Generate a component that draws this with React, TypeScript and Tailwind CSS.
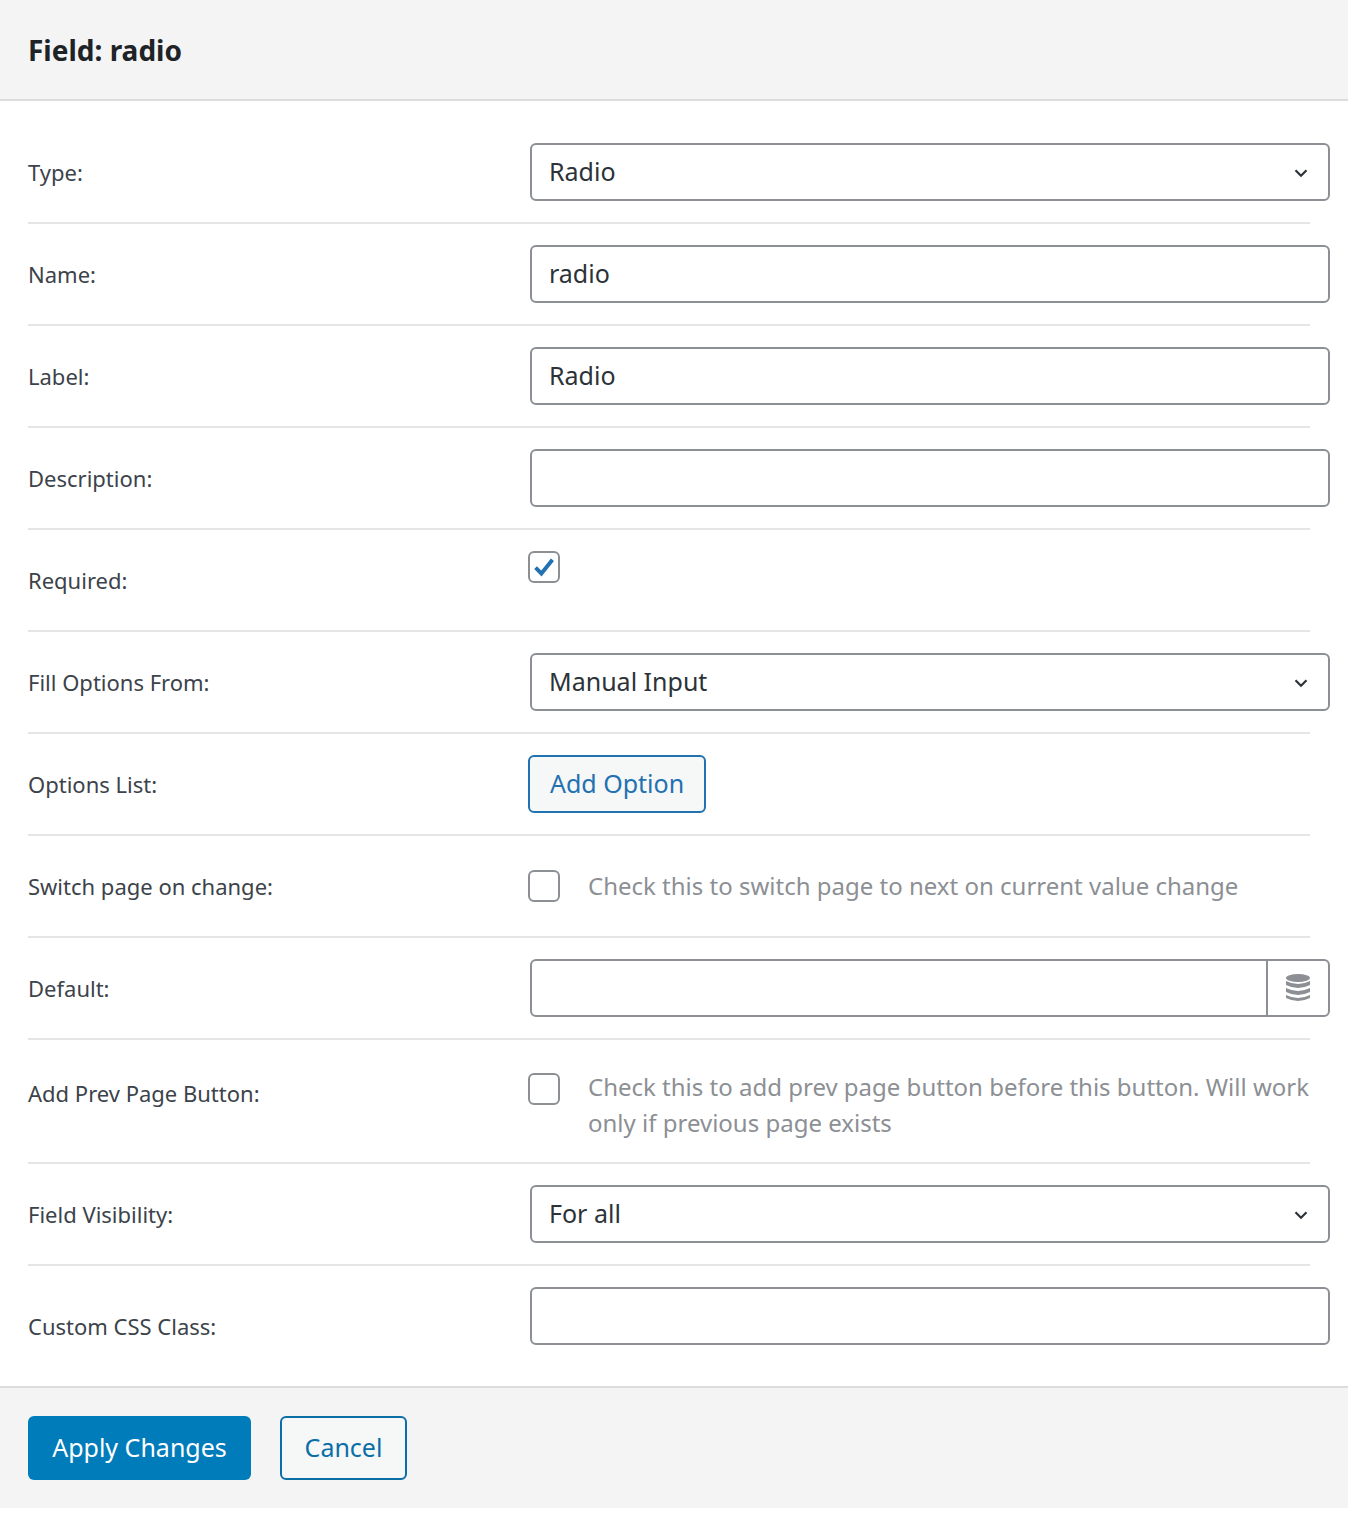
import React from "react";

const Chevron = () => (
  <svg width="22" height="22" viewBox="0 0 20 20" className="absolute right-[16px] top-[17px]">
    <path d="M5 7.5 L10 12.5 L15 7.5" fill="none" stroke="#2c3338" strokeWidth="2" />
  </svg>
);

const Row = ({ label, children, last, tall }: { label: string; children: React.ReactNode; last?: boolean; tall?: boolean }) => (
  <div className={`flex ${tall ? "items-start" : "items-center"} w-[1282px] ${last ? "" : "border-b-2 border-[#e5e5e5]"} py-[21px] min-h-[101px]`}>
    <div className={`w-[502px] shrink-0 ${tall ? "pt-[16px]" : ""}`}>{label}</div>
    <div className="w-[800px] shrink-0">{children}</div>
  </div>
);

const Input = ({ value }: { value?: string }) => (
  <div className="h-[58px] border-2 border-[#8c8f94] rounded-[6px] flex items-center px-[17px] text-[25px] text-[#2c3338] bg-white">{value}</div>
);
const Select = ({ value }: { value: string }) => (
  <div className="relative h-[58px] border-2 border-[#8c8f94] rounded-[6px] flex items-center px-[17px] text-[25px] text-[#2c3338] bg-white">
    {value}
    <Chevron />
  </div>
);
const Box = ({ checked }: { checked?: boolean }) => (
  <div className="w-[32px] h-[32px] border-2 border-[#8c8f94] rounded-[6px] shrink-0 -ml-[2px] flex items-center justify-center bg-white">
    {checked && (
      <svg width="26" height="26" viewBox="0 0 20 20"><path d="M3.5 10.5 L8 15 L16.5 4.5" fill="none" stroke="#2271b1" strokeWidth="3" /></svg>
    )}
  </div>
);

export default function App() {
  return (
    <div className="w-[1348px] bg-white text-[#2c3338]" style={{ fontFamily: '"Noto Sans", "Open Sans", sans-serif' }}>
      <div className="h-[101px] bg-[#f4f4f4] border-b-2 border-[#dcdcde] flex items-center px-[28px] text-[28px] font-bold text-[#1d2327]">Field: radio</div>
      <div className="pl-[28px] pt-[21px] text-[22px] text-[#3c434a]">
        <Row label="Type:"><Select value="Radio" /></Row>
        <Row label="Name:"><Input value="radio" /></Row>
        <Row label="Label:"><Input value="Radio" /></Row>
        <Row label="Description:"><Input /></Row>
        <Row label="Required:"><div className="h-[58px] flex items-start pt-[0px]"><Box checked /></div></Row>
        <Row label="Fill Options From:"><Select value="Manual Input" /></Row>
        <Row label="Options List:">
          <div className="h-[58px] w-[178px] -ml-[2px] border-2 border-[#2271b1] rounded-[6px] bg-[#f6f7f7] text-[#2271b1] text-[25px] flex items-center justify-center">Add Option</div>
        </Row>
        <Row label="Switch page on change:">
          <div className="flex items-center gap-[28px] h-[58px]"><Box /><span className="text-[#8c8f94] text-[24px]">Check this to switch page to next on current value change</span></div>
        </Row>
        <Row label="Default:">
          <div className="h-[58px] border-2 border-[#8c8f94] rounded-[6px] flex bg-white">
            <div className="flex-1 border-r-2 border-[#8c8f94]" />
            <div className="w-[60px] flex items-center justify-center">
              <svg width="26" height="30" viewBox="0 0 26 30">
                <ellipse cx="13" cy="5" rx="12" ry="4" fill="#8c8f94" />
                <path d="M1 8 Q13 14 25 8 V12 Q13 18 1 12Z" fill="#8c8f94" />
                <path d="M1 15 Q13 21 25 15 V19 Q13 25 1 19Z" fill="#8c8f94" />
                <path d="M1 22 Q13 28 25 22 V25 Q13 31 1 25Z" fill="#8c8f94" />
              </svg>
            </div>
          </div>
        </Row>
        <Row label="Add Prev Page Button:" tall>
          <div className="flex items-start gap-[28px] pt-[12px]"><Box /><span className="text-[#8c8f94] text-[24px] leading-[36px] -mt-[4px]">Check this to add prev page button before this button. Will work only if previous page exists</span></div>
        </Row>
        <Row label="Field Visibility:"><Select value="For all" /></Row>
        <Row label="Custom CSS Class:" last><div className="pb-[20px]"><Input /></div></Row>
      </div>
      <div className="bg-[#f4f4f4] border-t-2 border-[#dcdcde] h-[122px] px-[28px] flex items-center gap-[29px] text-[25px]">
        <div className="h-[64px] w-[223px] rounded-[6px] bg-[#007cba] text-white flex items-center justify-center">Apply Changes</div>
        <div className="h-[64px] w-[127px] rounded-[6px] border-2 border-[#0a6ea7] text-[#0a6ea7] bg-[#f6f7f7] flex items-center justify-center">Cancel</div>
      </div>
    </div>
  );
}
